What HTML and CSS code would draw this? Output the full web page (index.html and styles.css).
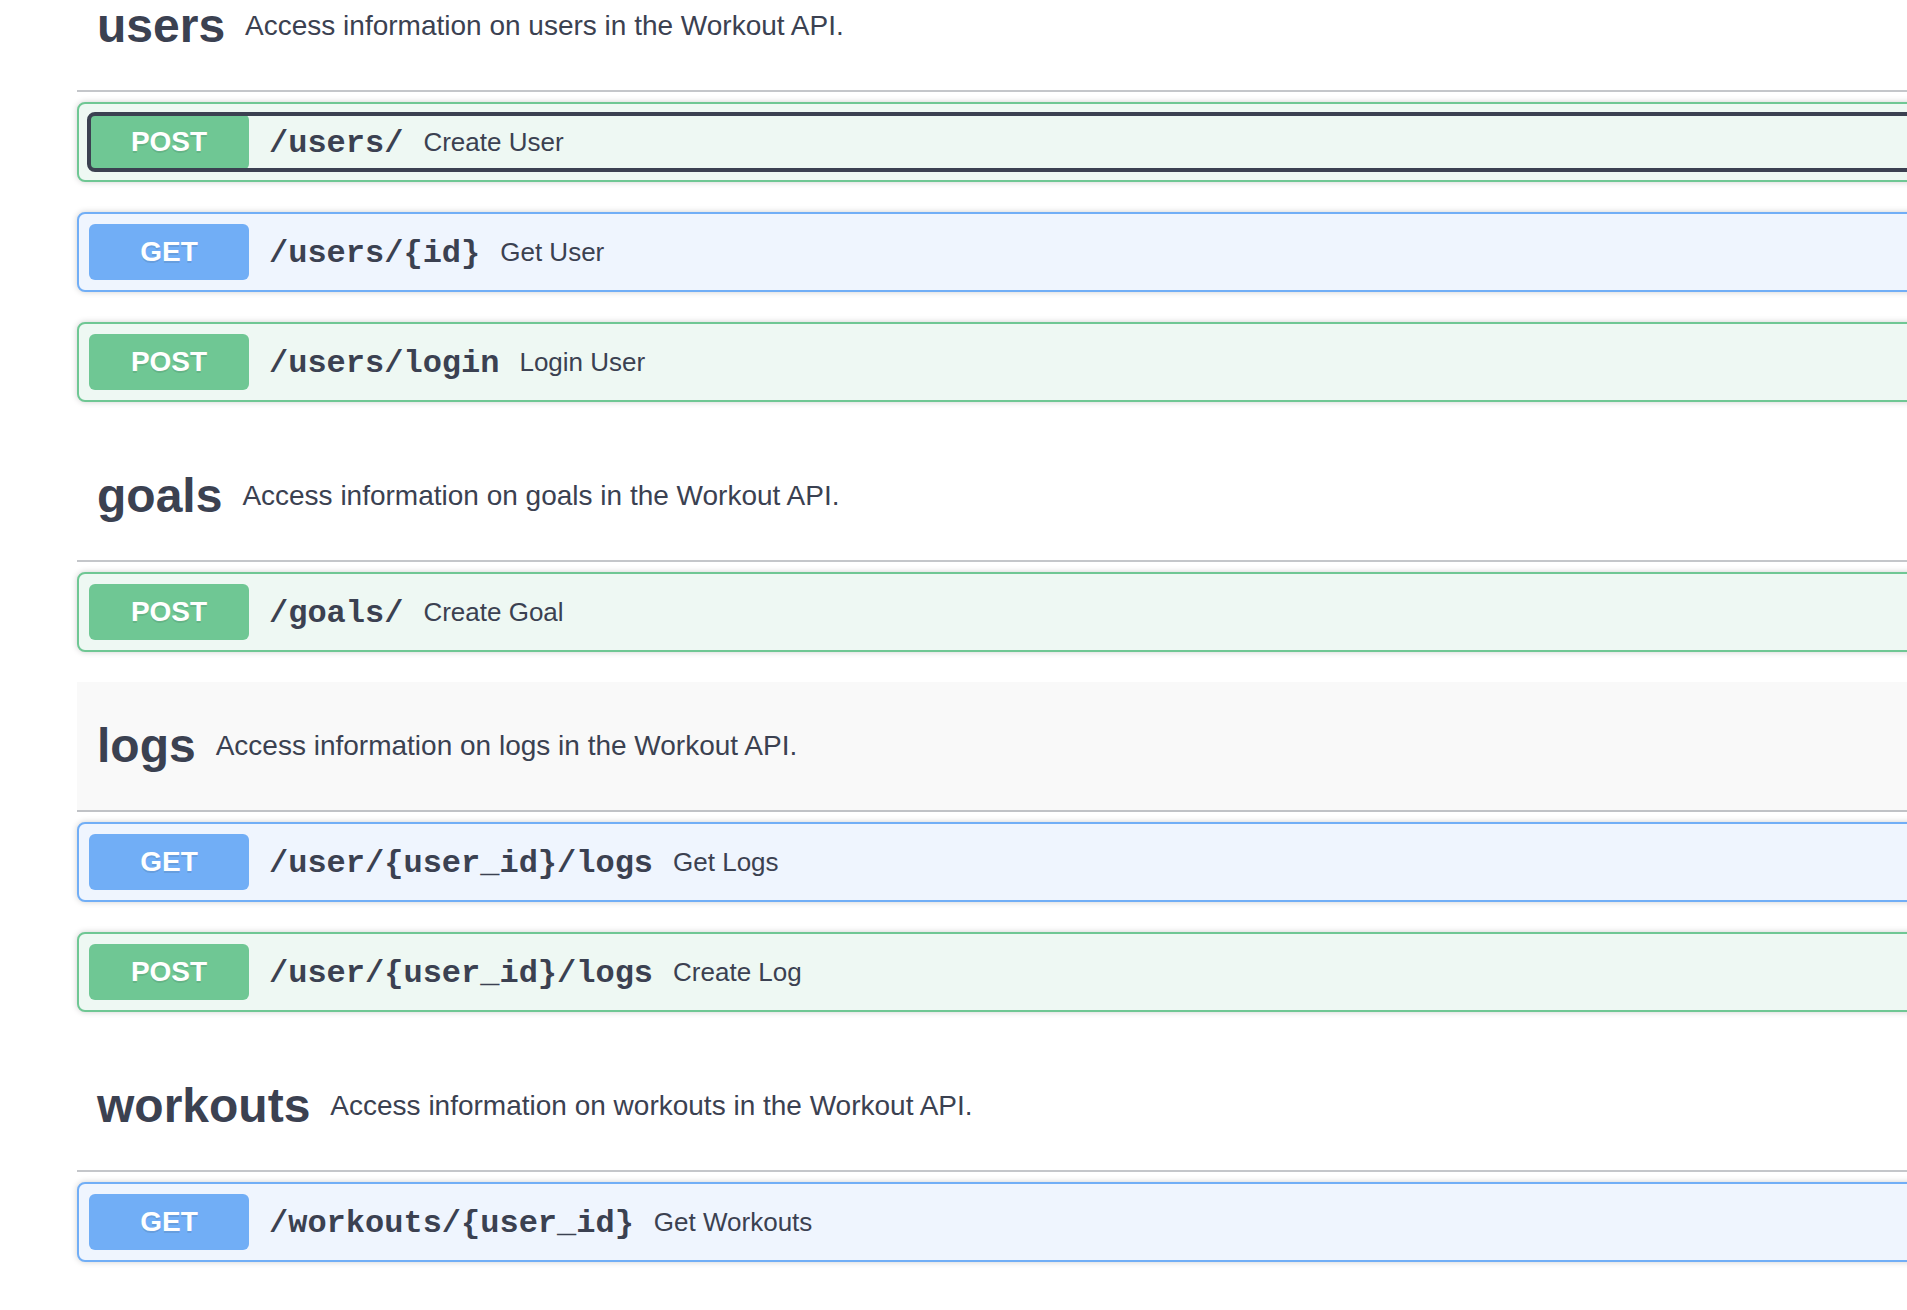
FILE: index.html
```html
<!DOCTYPE html>
<html lang="en">
<head>
<meta charset="utf-8">
<title>Workout API</title>
<link rel="stylesheet" href="styles.css">
</head>
<body>
<div class="page">
  <section class="tag-section">
    <h3 class="tag"><span class="tag-name">users</span><small class="tag-desc">Access information on users in the Workout API.</small></h3>
    <div class="opblock post">
      <div class="summary"><div class="control focused"><span class="method">POST</span><span class="path">/users/</span><span class="desc">Create User</span></div></div>
    </div>
    <div class="opblock get">
      <div class="summary"><div class="control"><span class="method">GET</span><span class="path">/users/{id}</span><span class="desc">Get User</span></div></div>
    </div>
    <div class="opblock post">
      <div class="summary"><div class="control"><span class="method">POST</span><span class="path">/users/login</span><span class="desc">Login User</span></div></div>
    </div>
  </section>

  <section class="tag-section">
    <h3 class="tag"><span class="tag-name">goals</span><small class="tag-desc">Access information on goals in the Workout API.</small></h3>
    <div class="opblock post">
      <div class="summary"><div class="control"><span class="method">POST</span><span class="path">/goals/</span><span class="desc">Create Goal</span></div></div>
    </div>
  </section>

  <section class="tag-section">
    <h3 class="tag hovered"><span class="tag-name">logs</span><small class="tag-desc">Access information on logs in the Workout API.</small></h3>
    <div class="opblock get">
      <div class="summary"><div class="control"><span class="method">GET</span><span class="path">/user/{user_id}/logs</span><span class="desc">Get Logs</span></div></div>
    </div>
    <div class="opblock post">
      <div class="summary"><div class="control"><span class="method">POST</span><span class="path">/user/{user_id}/logs</span><span class="desc">Create Log</span></div></div>
    </div>
  </section>

  <section class="tag-section">
    <h3 class="tag"><span class="tag-name">workouts</span><small class="tag-desc">Access information on workouts in the Workout API.</small></h3>
    <div class="opblock get">
      <div class="summary"><div class="control"><span class="method">GET</span><span class="path">/workouts/{user_id}</span><span class="desc">Get Workouts</span></div></div>
    </div>
  </section>
</div>
</body>
</html>
```

FILE: styles.css
```css
html, body {
  margin: 0;
  padding: 0;
  background: #ffffff;
  overflow: hidden;
}

body {
  font-family: "Liberation Sans", Arial, sans-serif;
  color: #3b4151;
}

.page {
  width: 2900px;
  margin-top: -38px;
  padding-left: 77px;
}

.tag-section {
  display: flex;
  flex-direction: column;
}

.tag {
  display: flex;
  align-items: center;
  height: 128px;
  margin: 0 0 10px;
  padding: 0 40px 0 20px;
  border-bottom: 2px solid rgba(59, 65, 81, 0.3);
  font-family: "Liberation Sans", Arial, sans-serif;
  font-size: 48px;
  font-weight: 700;
  color: #3b4151;
}

.tag.hovered {
  background: #f9f9f9;
}

.tag-name {
  line-height: 56px;
}

.tag-desc {
  flex: 1;
  padding: 0 20px;
  font-size: 28px;
  font-weight: 400;
}

.opblock {
  margin: 0 0 30px;
  border: 2px solid;
  border-radius: 8px;
  box-shadow: 0 0 6px rgba(0, 0, 0, 0.19);
}

.opblock.post {
  border-color: #6fc794;
  background: #eef8f3;
}

.opblock.get {
  border-color: #71aef6;
  background: #eff5fe;
}

.summary {
  padding: 10px;
}

.control {
  display: flex;
  align-items: center;
  border-radius: 6px;
}

.control.focused {
  outline: 4px solid #3b4151;
  outline-offset: -2px;
}

.method {
  min-width: 160px;
  padding: 12px 0;
  border-radius: 6px;
  font-family: "Liberation Sans", Arial, sans-serif;
  font-size: 28px;
  line-height: 32px;
  font-weight: 700;
  color: #ffffff;
  text-align: center;
  text-shadow: 0 2px 0 rgba(0, 0, 0, 0.1);
}

.post .method {
  background: #6fc794;
}

.get .method {
  background: #71aef6;
}

.path {
  padding: 3px 20px 0;
  font-family: "Liberation Mono", "Courier New", monospace;
  font-size: 32px;
  font-weight: 700;
  color: #3b4151;
}

.desc {
  font-family: "Liberation Sans", Arial, sans-serif;
  font-size: 26px;
  color: #3b4151;
}
```
